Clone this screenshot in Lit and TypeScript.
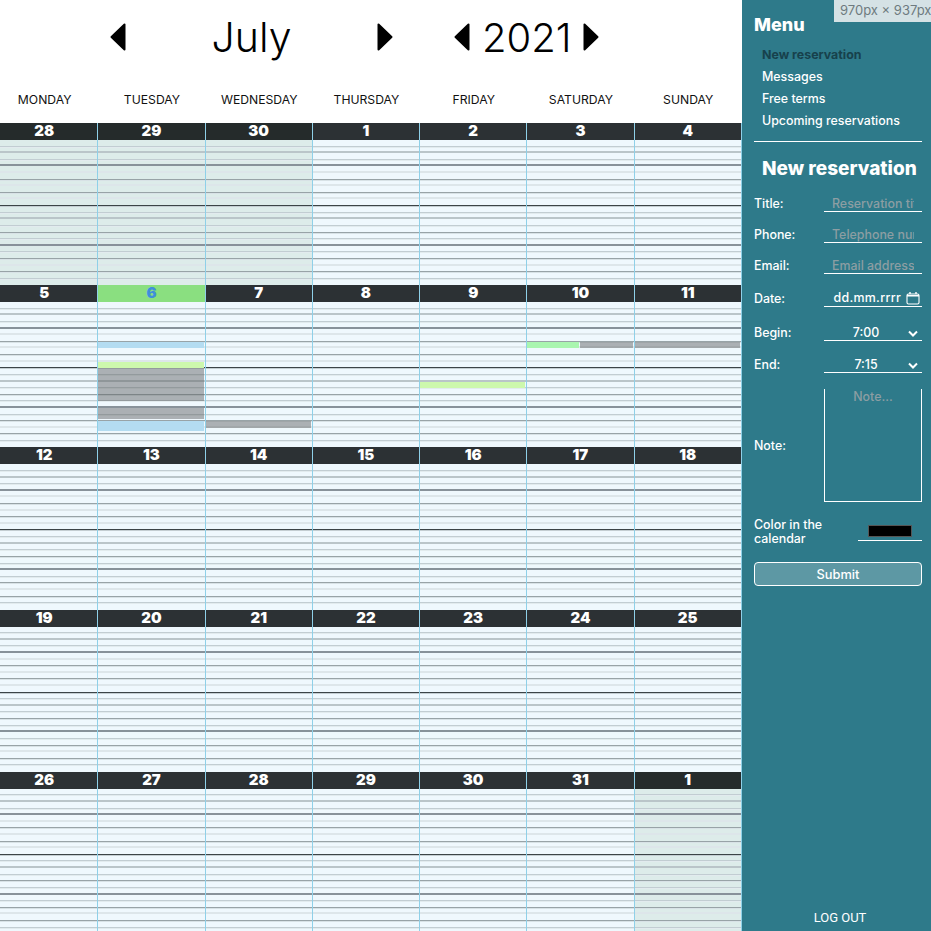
import { css, html, LitElement } from "lit";
import { customElement } from "lit/decorators.js";

type CalEvent = { week: number; day: number; slot: number; span: number; color: string; left?: number; width?: number };

const DAYS = ["Monday", "Tuesday", "Wednesday", "Thursday", "Friday", "Saturday", "Sunday"];

const WEEKS = [
  [28, 29, 30, 1, 2, 3, 4],
  [5, 6, 7, 8, 9, 10, 11],
  [12, 13, 14, 15, 16, 17, 18],
  [19, 20, 21, 22, 23, 24, 25],
  [26, 27, 28, 29, 30, 31, 1],
];

const SLOT = 6.61;

// line weight of every 15 minute slot, the last one has no line
const LINES = [
  "l1", "l2", "l1", "l4", "l0", "l3", "l0", "l3", "l0", "l5", "l1",
  "l2", "l1", "l3", "l1", "l4", "l1", "l3", "l0", "l3", "l1", "",
];

const BLUE = "#b4dcf1";
const LIME = "#cdf8ad";
const GREEN = "#a9f5b0";
const GRAY = "rgba(96, 98, 100, 0.48)";

const EVENTS: CalEvent[] = [
  { week: 1, day: 1, slot: 6, span: 1, color: BLUE },
  { week: 1, day: 1, slot: 9, span: 1, color: LIME },
  { week: 1, day: 1, slot: 10, span: 5, color: GRAY },
  { week: 1, day: 1, slot: 16, span: 1.6, color: GRAY },
  { week: 1, day: 1, slot: 18, span: 1.5, color: BLUE },
  { week: 1, day: 2, slot: 18, span: 1, color: GRAY },
  { week: 1, day: 4, slot: 12, span: 1, color: LIME },
  { week: 1, day: 5, slot: 6, span: 1, color: GREEN, width: 50 },
  { week: 1, day: 5, slot: 6, span: 1, color: GRAY, left: 50, width: 50 },
  { week: 1, day: 6, slot: 6, span: 1, color: GRAY },
];

const isOtherMonth = (week: number, date: number) => (week === 0 && date > 20) || (week === 4 && date < 10);

const arrow = (dir: "left" | "right") => html`<svg class="arrow" viewBox="0 0 16 28" aria-hidden="true">
  <path
    d=${dir === "left" ? "M14.5 1.5V26.5L1.5 14Z" : "M1.5 1.5V26.5L14.5 14Z"}
    fill="#000"
    stroke="#000"
    stroke-width="2"
    stroke-linejoin="round"
  />
</svg>`;

const chevron = html`<svg class="chevron" viewBox="0 0 10 7" aria-hidden="true">
  <path d="M1 1.5L5 5.5L9 1.5" fill="none" stroke="#fff" stroke-width="2" />
</svg>`;

@customElement("app-root")
export class AppRoot extends LitElement {
  static styles = css`
    :host {
      display: flex;
      position: relative;
      width: 931px;
      height: 931px;
      overflow: hidden;
      background: #fff;
      font-family: Inter, "Open Sans", sans-serif;
      color: #000;
    }
    main {
      width: 742px;
      flex: none;
    }
    .title {
      display: flex;
      align-items: center;
      height: 74px;
      padding-left: 110px;
    }
    .arrow {
      width: 16px;
      height: 28px;
      flex: none;
    }
    .month {
      width: 251px;
      text-align: center;
      font-size: 41px;
      font-weight: 350;
    }
    .year {
      margin: 0 11px 0 12px;
      font-size: 40px;
      font-weight: 350;
    }
    .gap {
      width: 61px;
    }
    .calendar {
      display: grid;
      grid-template-columns: repeat(7, 107.25px);
      margin-left: -8.95px;
    }
    .weekday {
      height: 49px;
      box-sizing: border-box;
      padding-top: 2px;
      display: flex;
      align-items: center;
      justify-content: center;
      font-size: 12.2px;
      text-transform: uppercase;
      color: #111;
    }
    .day {
      position: relative;
      height: 162.2px;
      border-right: 1px solid #8fd0e8;
      background: #eff8fd;
    }
    .day.other {
      background: #ddecea;
    }
    .date {
      height: 17px;
      line-height: 16px;
      text-align: center;
      font-size: 15px;
      font-weight: 900;
      color: #fff;
      background: #2c3134;
    }
    .other .date {
      background: #252b2b;
    }
    .today .date {
      background: #8adf80;
      color: #3f8fdc;
    }
    .slot {
      height: 6.61px;
      box-sizing: border-box;
    }
    .l0 {
      border-bottom: 2px solid #dde6ea;
    }
    .l1 {
      border-bottom: 1px solid #c2cdd2;
      box-shadow: 0 1px 0 #e2ebee;
    }
    .l2 {
      border-bottom: 2px solid #bac5c9;
    }
    .l3 {
      border-bottom: 1px solid #98a3a7;
      box-shadow: 0 1px 0 #d8e2e6;
    }
    .l4 {
      border-bottom: 2px solid #88929a;
    }
    .l5 {
      border-bottom: 1px solid #3c4447;
      box-shadow: 0 1px 0 #c4ced2;
    }
    .event {
      position: absolute;
    }
    aside {
      flex: 1;
      display: flex;
      flex-direction: column;
      box-sizing: border-box;
      padding: 0 9px 0 12px;
      background: #2e7a8a;
      color: #fff;
      font-weight: 500;
    }
    .menu-title {
      margin: 14px 0 0;
      height: 22px;
      line-height: 22px;
      font-size: 18px;
      font-weight: 800;
    }
    nav {
      display: flex;
      flex-direction: column;
      margin-top: 8px;
      padding: 0 0 9px 8px;
      border-bottom: 1px solid #fff;
      font-size: 12.4px;
    }
    nav a {
      height: 22px;
      line-height: 22px;
    }
    nav a.active {
      font-weight: 700;
      color: #17414c;
    }
    h2 {
      margin: 16px 0 12px 8px;
      height: 22px;
      line-height: 22px;
      font-size: 19px;
      font-weight: 800;
      white-space: nowrap;
    }
    .row {
      display: grid;
      grid-template-columns: 70px 98px;
      align-items: center;
      font-size: 12.4px;
      margin-bottom: 11px;
    }
    .row label {
      padding-top: 3px;
    }
    .row input {
      width: 100%;
      box-sizing: border-box;
      height: 20px;
      margin: 0;
      padding: 3px 8px 0;
      border: 0;
      border-bottom: 1px solid #fff;
      background: none;
      outline: none;
      font: inherit;
      color: #fff;
      text-align: center;
    }
    input::placeholder,
    .textarea {
      color: #8c9ea3;
      opacity: 1;
    }
    .field {
      display: flex;
      align-items: center;
      box-sizing: border-box;
      border-bottom: 1px solid #fff;
      height: 21px;
    }
    .date-row {
      margin-top: 1px;
      margin-bottom: 13px;
    }
    .date-field {
      justify-content: flex-end;
      gap: 5px;
      padding: 3px 2px 0 0;
      letter-spacing: 0.3px;
    }
    .cal-icon {
      width: 14px;
      height: 14px;
      flex: none;
    }
    .select {
      position: relative;
      justify-content: center;
      padding: 5px 14px 0 0;
    }
    .chevron {
      position: absolute;
      right: 4px;
      top: 10px;
      width: 10px;
      height: 7px;
    }
    .note-row {
      margin: 5px 0 0;
    }
    .row.note-row label {
      padding-top: 0;
    }
    .textarea {
      height: 113px;
      box-sizing: border-box;
      border: 1px solid #fff;
      border-top: 0;
      text-align: center;
    }
    .color-row {
      display: flex;
      justify-content: space-between;
      align-items: flex-start;
      margin-top: 16px;
      font-size: 12.4px;
      line-height: 14px;
    }
    .color-label {
      width: 90px;
    }
    .swatch-field {
      display: flex;
      justify-content: center;
      width: 64px;
      margin-top: 7px;
      padding-bottom: 3px;
      border-bottom: 1px solid #fff;
    }
    .swatch {
      width: 44px;
      height: 12px;
      box-sizing: border-box;
      background: #000;
      border: 1px solid #555;
    }
    .submit {
      height: 24px;
      margin-top: 16px;
      width: 168px;
      box-sizing: border-box;
      border: 1px solid #fff;
      border-radius: 4px;
      background: #5d98a4;
      color: #fff;
      font: inherit;
      font-size: 12.8px;
      padding: 0;
    }
    .logout {
      margin-top: auto;
      margin-bottom: 6px;
      padding-left: 4px;
      text-align: center;
      font-family: Roboto, sans-serif;
      font-size: 13px;
      font-weight: 400;
      line-height: 15px;
    }
    .size-tip {
      position: absolute;
      top: 0;
      left: 834px;
      width: 97px;
      height: 22px;
      padding-left: 6px;
      box-sizing: border-box;
      line-height: 21px;
      font-size: 13px;
      background: #d5e2e5;
      color: #6e7b7f;
      white-space: nowrap;
    }
  `;

  private renderDay(date: number, week: number, day: number) {
    const classes = [
      "day",
      isOtherMonth(week, date) ? "other" : "",
      week === 1 && date === 6 ? "today" : "",
    ].join(" ");
    const events = EVENTS.filter((e) => e.week === week && e.day === day);
    return html`<div class=${classes}>
      <div class="date">${date}</div>
      ${LINES.map((line) => html`<div class="slot ${line}"></div>`)}
      ${events.map(
        (e) => html`<div
          class="event"
          style="top:${17 + e.slot * SLOT}px;height:${e.span * SLOT}px;left:${e.left ?? 0}%;width:calc(${e.width ?? 100}% - 1px);background:${e.color}"
        ></div>`
      )}
    </div>`;
  }

  render() {
    return html`
      <main>
        <div class="title">
          ${arrow("left")}
          <div class="month">July</div>
          ${arrow("right")}
          <div class="gap"></div>
          ${arrow("left")}
          <div class="year">2021</div>
          ${arrow("right")}
        </div>
        <div class="calendar">
          ${DAYS.map((d) => html`<div class="weekday">${d}</div>`)}
          ${WEEKS.map((dates, week) => dates.map((date, day) => this.renderDay(date, week, day)))}
        </div>
      </main>
      <aside>
        <h1 class="menu-title">Menu</h1>
        <nav>
          <a class="active">New reservation</a>
          <a>Messages</a>
          <a>Free terms</a>
          <a>Upcoming reservations</a>
        </nav>
        <h2>New reservation</h2>
        <div class="row"><label>Title:</label><input placeholder="Reservation title" /></div>
        <div class="row"><label>Phone:</label><input placeholder="Telephone number" /></div>
        <div class="row"><label>Email:</label><input placeholder="Email address" /></div>
        <div class="row date-row">
          <label>Date:</label>
          <div class="field date-field">
            dd.mm.rrrr
            <svg class="cal-icon" viewBox="0 0 14 14" aria-hidden="true">
              <rect x="1" y="3" width="12" height="10" rx="1.5" fill="none" stroke="#fff" stroke-width="1.1" />
              <path d="M1 4.8H13M4 1V3M10 1V3" fill="none" stroke="#fff" stroke-width="1.4" />
            </svg>
          </div>
        </div>
        <div class="row"><label>Begin:</label><div class="field select">7:00${chevron}</div></div>
        <div class="row"><label>End:</label><div class="field select">7:15${chevron}</div></div>
        <div class="row note-row"><label>Note:</label><div class="textarea">Note...</div></div>
        <div class="color-row">
          <div class="color-label">Color in the calendar</div>
          <div class="swatch-field"><div class="swatch"></div></div>
        </div>
        <button class="submit">Submit</button>
        <div class="logout">LOG OUT</div>
      </aside>
      <div class="size-tip">970px × 937px</div>
    `;
  }
}
